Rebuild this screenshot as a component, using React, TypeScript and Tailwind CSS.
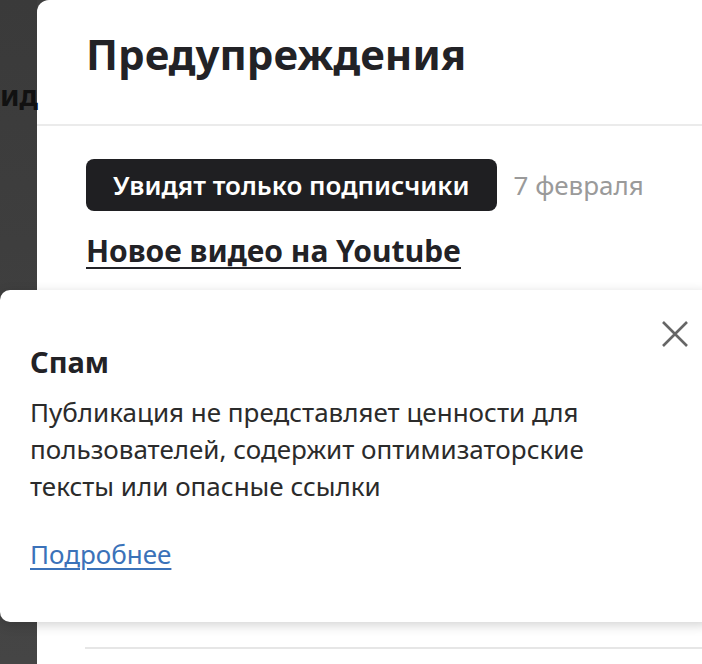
import React from "react";

export default function App() {
  const font = { fontFamily: '"Noto Sans", "Open Sans", sans-serif' };
  return (
    <div className="relative w-[702px] h-[664px] overflow-hidden bg-[#3f3f3f]" style={font}>
      <div className="flex h-full">
        <div className="w-[37px] shrink-0 relative bg-gradient-to-b from-[#3a3a3a] to-[#454545]">
          <div className="absolute left-0 top-[80px] whitespace-nowrap text-[29px] font-bold text-[#111] leading-none">
            ид
          </div>
        </div>
        <div className="flex-1 bg-white rounded-tl-[12px] flex flex-col">
          <div className="h-[126px] border-b-2 border-[#ebebeb] pl-[49px] pt-[24px]">
            <h1 className="text-[42px] font-bold text-[#222226] leading-[60px]">Предупреждения</h1>
          </div>
          <div className="pl-[49px] pt-[33px]">
            <div className="flex items-center gap-[17px]">
              <span className="h-[52px] px-[27px] rounded-[8px] bg-[#1f1f22] text-white text-[26px] font-semibold flex items-center">
                Увидят только подписчики
              </span>
              <span className="text-[26px] text-[#9a9a9a]">7 февраля</span>
            </div>
            <a className="block mt-[20px] text-[30px] font-bold text-[#222226] underline decoration-2 underline-offset-[5px] leading-[40px]">
              Новое видео на Youtube
            </a>
          </div>
          <div className="mt-auto mb-[15px] ml-[48px] border-t-2 border-[#e6e6e6]" />
        </div>
      </div>
      <div className="absolute left-0 right-[-10px] top-[290px] h-[332px] bg-white rounded-[10px] shadow-[0_3px_12px_rgba(0,0,0,0.18)] pl-[30px] pt-[52px]">
        <button className="absolute right-[21px] top-[28px] w-[32px] h-[32px] flex items-center justify-center">
          <svg width="30" height="30" viewBox="0 0 30 30">
            <path d="M3 3 L27 27 M27 3 L3 27" stroke="#666" strokeWidth="2.6" strokeLinecap="butt" />
          </svg>
        </button>
        <div className="text-[29px] font-bold text-[#222226] leading-[40px]">Спам</div>
        <p className="mt-[12px] text-[26px] text-[#2b2b2b] leading-[37px] w-[600px]">
          Публикация не представляет ценности для пользователей, содержит оптимизаторские тексты или опасные ссылки
        </p>
        <a className="inline-block mt-[31px] text-[26px] text-[#3b72b9] underline underline-offset-[4px] leading-[37px]">Подробнее</a>
      </div>
    </div>
  );
}
